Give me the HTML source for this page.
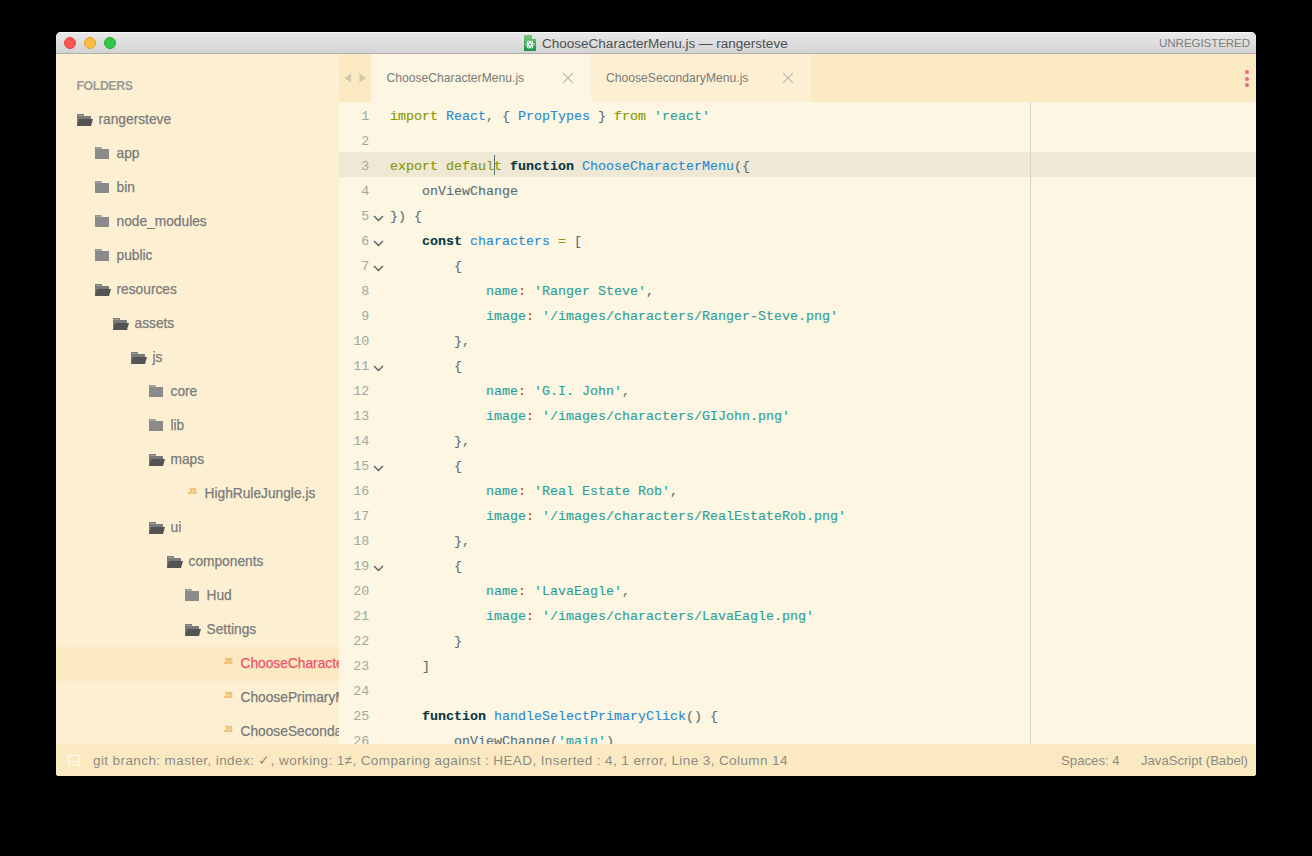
<!DOCTYPE html>
<html><head><meta charset="utf-8"><style>
html,body{margin:0;padding:0;background:#000;width:1312px;height:856px;overflow:hidden}
#win{position:absolute;left:56px;top:32px;width:1200px;height:744px;border-radius:5px 5px 3px 3px;overflow:hidden;background:#FDF6E3}
.abs{position:absolute}
#title{position:absolute;left:0;top:0;width:1200px;height:21px;background:linear-gradient(#fbfbfb 0,#f4f4f4 1px,#e8e8e8 1.5px,#d3d3d3 100%);border-bottom:1px solid #b0b0b2}
.tl{position:absolute;top:5px;width:12px;height:12px;border-radius:50%;box-sizing:border-box}
#ttl{position:absolute;left:486px;top:4px;font:13.52px "Liberation Sans",sans-serif;color:#505050;white-space:nowrap;line-height:16px}
#unreg{position:absolute;right:6px;top:3.6px;letter-spacing:-0.1px;font:11.6px "Liberation Sans",sans-serif;color:#7e7e7e;line-height:13px}
/* everything below is positioned in page coords */
#pg{position:absolute;left:-56px;top:-32px;width:1312px;height:856px}
#sidebar{position:absolute;left:56px;top:54px;width:283px;height:690px;background:#FDF0D2;overflow:hidden}
#sbin{position:absolute;left:-56px;top:-54px;width:1312px;height:856px}
.tn{position:absolute;-webkit-text-stroke:0.25px currentColor;font:13.75px "Liberation Sans",sans-serif;color:#787a7b;line-height:16px;white-space:nowrap}
.tn.sel{color:#F0506E}
.selrow{position:absolute;left:56px;width:283px;height:34px;background:#FBEAC1}
.fic{position:absolute;height:12px;line-height:0}
.jsic{position:absolute;font:bold 9px "Liberation Sans",sans-serif;color:#EDB665;line-height:9px;letter-spacing:-0.3px;transform:scaleX(0.82);transform-origin:0 0;-webkit-text-stroke:0.35px #EDB665}
#folders{position:absolute;left:76.5px;top:80px;letter-spacing:-0.4px;font:bold 12.3px "Liberation Sans",sans-serif;color:#9a9a98;line-height:13px}
#tabbar{position:absolute;left:339px;top:54px;width:917px;height:48px;background:#FBEAC1}
#tab1{position:absolute;left:371px;top:54px;width:220px;height:48px;background:#FDF6E3}
#tab2{position:absolute;left:591px;top:54px;width:220px;height:48px;background:#FDF0D2}
.tabt{position:absolute;top:71px;font:12.15px "Liberation Sans",sans-serif;color:#7a7a78;line-height:14px;white-space:nowrap}
#editor{position:absolute;left:339px;top:102px;width:917px;height:642px;background:#FDF6E3;overflow:hidden}
#edin{position:absolute;left:-339px;top:-102px;width:1312px;height:856px}
.ln{position:absolute;left:339px;width:30.2px;text-align:right;font:13.333px "Liberation Mono",monospace;color:#a0a8a5;line-height:25px;height:25px}
.cl{position:absolute;-webkit-text-stroke:0.12px currentColor;left:390px;font:13.333px "Liberation Mono",monospace;line-height:25px;height:25px;white-space:pre}
.fold{position:absolute;left:373px}
#curline{position:absolute;left:339px;top:152px;width:917px;height:25px;background:#EEE8D5}
#ruler{position:absolute;left:1030px;top:102px;width:1px;height:642px;background:#d5d4c9}
#caret{position:absolute;left:494px;top:155px;width:1px;height:20px;background:#586E75}
#status{position:absolute;left:56px;top:744px;width:1200px;height:32px;background:#FBEAC1}
.st{position:absolute;top:753px;font:13.5px "Liberation Sans",sans-serif;letter-spacing:0.4px;color:#8c8a85;line-height:16px;white-space:nowrap}
</style></head><body>
<div id="win">
 <div id="pg">
  <div id="sidebar"><div id="sbin">
   <div id="folders">FOLDERS</div>
   <div class="fic" style="left:77px;top:114px"><svg width="16" height="12" viewBox="0 0 16 12"><path d="M0 0.6 Q0 0 0.6 0 H6.4 Q7 0 7 0.6 V2 H13.4 Q14 2 14 2.6 V12 H0Z" fill="#7a7a7a"/><path d="M1 1 H6 V1.8 H1Z" fill="#a8a8a8"/><path d="M2 5 H16 L14 12 H0 Z" fill="#545454"/></svg></div><div class="tn" style="left:98.5px;top:112px">rangersteve</div><div class="fic" style="left:95px;top:147px"><svg width="14" height="12" viewBox="0 0 14 12"><path d="M0 0.6 Q0 0 0.6 0 H6 Q6.6 0 6.6 0.6 V2 H13.4 Q14 2 14 2.6 V11.4 Q14 12 13.4 12 H0.6 Q0 12 0 11.4 Z" fill="#8a8a8a"/><path d="M1 0.8 H5.8 V1.6 H1Z" fill="#c8c8c8"/></svg></div><div class="tn" style="left:116.5px;top:146px">app</div><div class="fic" style="left:95px;top:181px"><svg width="14" height="12" viewBox="0 0 14 12"><path d="M0 0.6 Q0 0 0.6 0 H6 Q6.6 0 6.6 0.6 V2 H13.4 Q14 2 14 2.6 V11.4 Q14 12 13.4 12 H0.6 Q0 12 0 11.4 Z" fill="#8a8a8a"/><path d="M1 0.8 H5.8 V1.6 H1Z" fill="#c8c8c8"/></svg></div><div class="tn" style="left:116.5px;top:180px">bin</div><div class="fic" style="left:95px;top:215px"><svg width="14" height="12" viewBox="0 0 14 12"><path d="M0 0.6 Q0 0 0.6 0 H6 Q6.6 0 6.6 0.6 V2 H13.4 Q14 2 14 2.6 V11.4 Q14 12 13.4 12 H0.6 Q0 12 0 11.4 Z" fill="#8a8a8a"/><path d="M1 0.8 H5.8 V1.6 H1Z" fill="#c8c8c8"/></svg></div><div class="tn" style="left:116.5px;top:214px">node_modules</div><div class="fic" style="left:95px;top:249px"><svg width="14" height="12" viewBox="0 0 14 12"><path d="M0 0.6 Q0 0 0.6 0 H6 Q6.6 0 6.6 0.6 V2 H13.4 Q14 2 14 2.6 V11.4 Q14 12 13.4 12 H0.6 Q0 12 0 11.4 Z" fill="#8a8a8a"/><path d="M1 0.8 H5.8 V1.6 H1Z" fill="#c8c8c8"/></svg></div><div class="tn" style="left:116.5px;top:248px">public</div><div class="fic" style="left:95px;top:284px"><svg width="16" height="12" viewBox="0 0 16 12"><path d="M0 0.6 Q0 0 0.6 0 H6.4 Q7 0 7 0.6 V2 H13.4 Q14 2 14 2.6 V12 H0Z" fill="#7a7a7a"/><path d="M1 1 H6 V1.8 H1Z" fill="#a8a8a8"/><path d="M2 5 H16 L14 12 H0 Z" fill="#545454"/></svg></div><div class="tn" style="left:116.5px;top:282px">resources</div><div class="fic" style="left:113px;top:318px"><svg width="16" height="12" viewBox="0 0 16 12"><path d="M0 0.6 Q0 0 0.6 0 H6.4 Q7 0 7 0.6 V2 H13.4 Q14 2 14 2.6 V12 H0Z" fill="#7a7a7a"/><path d="M1 1 H6 V1.8 H1Z" fill="#a8a8a8"/><path d="M2 5 H16 L14 12 H0 Z" fill="#545454"/></svg></div><div class="tn" style="left:134.5px;top:316px">assets</div><div class="fic" style="left:131px;top:352px"><svg width="16" height="12" viewBox="0 0 16 12"><path d="M0 0.6 Q0 0 0.6 0 H6.4 Q7 0 7 0.6 V2 H13.4 Q14 2 14 2.6 V12 H0Z" fill="#7a7a7a"/><path d="M1 1 H6 V1.8 H1Z" fill="#a8a8a8"/><path d="M2 5 H16 L14 12 H0 Z" fill="#545454"/></svg></div><div class="tn" style="left:152.5px;top:350px">js</div><div class="fic" style="left:149px;top:385px"><svg width="14" height="12" viewBox="0 0 14 12"><path d="M0 0.6 Q0 0 0.6 0 H6 Q6.6 0 6.6 0.6 V2 H13.4 Q14 2 14 2.6 V11.4 Q14 12 13.4 12 H0.6 Q0 12 0 11.4 Z" fill="#8a8a8a"/><path d="M1 0.8 H5.8 V1.6 H1Z" fill="#c8c8c8"/></svg></div><div class="tn" style="left:170.5px;top:384px">core</div><div class="fic" style="left:149px;top:419px"><svg width="14" height="12" viewBox="0 0 14 12"><path d="M0 0.6 Q0 0 0.6 0 H6 Q6.6 0 6.6 0.6 V2 H13.4 Q14 2 14 2.6 V11.4 Q14 12 13.4 12 H0.6 Q0 12 0 11.4 Z" fill="#8a8a8a"/><path d="M1 0.8 H5.8 V1.6 H1Z" fill="#c8c8c8"/></svg></div><div class="tn" style="left:170.5px;top:418px">lib</div><div class="fic" style="left:149px;top:454px"><svg width="16" height="12" viewBox="0 0 16 12"><path d="M0 0.6 Q0 0 0.6 0 H6.4 Q7 0 7 0.6 V2 H13.4 Q14 2 14 2.6 V12 H0Z" fill="#7a7a7a"/><path d="M1 1 H6 V1.8 H1Z" fill="#a8a8a8"/><path d="M2 5 H16 L14 12 H0 Z" fill="#545454"/></svg></div><div class="tn" style="left:170.5px;top:452px">maps</div><div class="jsic" style="left:188px;top:487px">JS</div><div class="tn" style="left:204.5px;top:486px">HighRuleJungle.js</div><div class="fic" style="left:149px;top:522px"><svg width="16" height="12" viewBox="0 0 16 12"><path d="M0 0.6 Q0 0 0.6 0 H6.4 Q7 0 7 0.6 V2 H13.4 Q14 2 14 2.6 V12 H0Z" fill="#7a7a7a"/><path d="M1 1 H6 V1.8 H1Z" fill="#a8a8a8"/><path d="M2 5 H16 L14 12 H0 Z" fill="#545454"/></svg></div><div class="tn" style="left:170.5px;top:520px">ui</div><div class="fic" style="left:167px;top:556px"><svg width="16" height="12" viewBox="0 0 16 12"><path d="M0 0.6 Q0 0 0.6 0 H6.4 Q7 0 7 0.6 V2 H13.4 Q14 2 14 2.6 V12 H0Z" fill="#7a7a7a"/><path d="M1 1 H6 V1.8 H1Z" fill="#a8a8a8"/><path d="M2 5 H16 L14 12 H0 Z" fill="#545454"/></svg></div><div class="tn" style="left:188.5px;top:554px">components</div><div class="fic" style="left:185px;top:589px"><svg width="14" height="12" viewBox="0 0 14 12"><path d="M0 0.6 Q0 0 0.6 0 H6 Q6.6 0 6.6 0.6 V2 H13.4 Q14 2 14 2.6 V11.4 Q14 12 13.4 12 H0.6 Q0 12 0 11.4 Z" fill="#8a8a8a"/><path d="M1 0.8 H5.8 V1.6 H1Z" fill="#c8c8c8"/></svg></div><div class="tn" style="left:206.5px;top:588px">Hud</div><div class="fic" style="left:185px;top:624px"><svg width="16" height="12" viewBox="0 0 16 12"><path d="M0 0.6 Q0 0 0.6 0 H6.4 Q7 0 7 0.6 V2 H13.4 Q14 2 14 2.6 V12 H0Z" fill="#7a7a7a"/><path d="M1 1 H6 V1.8 H1Z" fill="#a8a8a8"/><path d="M2 5 H16 L14 12 H0 Z" fill="#545454"/></svg></div><div class="tn" style="left:206.5px;top:622px">Settings</div><div class="selrow" style="top:647px"></div><div class="jsic" style="left:224px;top:657px">JS</div><div class="tn sel" style="left:240.5px;top:656px">ChooseCharacterMenu.js</div><div class="jsic" style="left:224px;top:691px">JS</div><div class="tn" style="left:240.5px;top:690px">ChoosePrimaryMenu.js</div><div class="jsic" style="left:224px;top:725px">JS</div><div class="tn" style="left:240.5px;top:724px">ChooseSecondaryMenu.js</div>
  </div></div>
  <div id="tabbar"></div>
  <div id="tab1"></div>
  <div id="tab2"></div>
  <svg class="abs" style="left:344px;top:73px" width="8" height="10" viewBox="0 0 8 10"><path d="M7 0.5 V9.5 L0.5 5Z" fill="#cfc6ad"/></svg>
  <svg class="abs" style="left:359px;top:73px" width="8" height="10" viewBox="0 0 8 10"><path d="M0.5 0.5 V9.5 L7 5Z" fill="#cfc6ad"/></svg>
  <div class="tabt" style="left:386.5px">ChooseCharacterMenu.js</div>
  <div class="tabt" style="left:606px">ChooseSecondaryMenu.js</div>
  <svg class="abs" style="left:562px;top:72px" width="12" height="12" viewBox="0 0 12 12"><path d="M1 1L11 11M11 1L1 11" stroke="#c0bdb4" stroke-width="1.2"/></svg>
  <svg class="abs" style="left:782px;top:72px" width="12" height="12" viewBox="0 0 12 12"><path d="M1 1L11 11M11 1L1 11" stroke="#c0bdb4" stroke-width="1.2"/></svg>
  <div class="abs" style="left:1244.5px;top:70px;width:4px;height:4px;border-radius:50%;background:#F0648A"></div>
  <div class="abs" style="left:1244.5px;top:76.5px;width:4px;height:4px;border-radius:50%;background:#F0648A"></div>
  <div class="abs" style="left:1244.5px;top:83px;width:4px;height:4px;border-radius:50%;background:#F0648A"></div>
  <div id="editor"><div id="edin">
   <div id="curline"></div>
   <div id="ruler"></div>
   <div class="ln" style="top:104px">1</div><div class="cl" style="top:104px"><span style="color:#859900">import </span><span style="color:#268BD2">React</span><span style="color:#586E75">, { </span><span style="color:#268BD2">PropTypes</span><span style="color:#586E75"> } </span><span style="color:#859900">from</span><span style="color:#586E75"> </span><span style="color:#2AA198">&#x27;react&#x27;</span></div><div class="ln" style="top:129px">2</div><div class="cl" style="top:129px"></div><div class="ln" style="top:154px">3</div><div class="cl" style="top:154px"><span style="color:#859900">export default </span><span style="color:#073642;font-weight:bold">function</span><span style="color:#586E75"> </span><span style="color:#268BD2">ChooseCharacterMenu</span><span style="color:#586E75">({</span></div><div class="ln" style="top:179px">4</div><div class="cl" style="top:179px"><span style="color:#586E75">    onViewChange</span></div><div class="ln" style="top:204px">5</div><svg class="fold" style="top:215px" width="11" height="7" viewBox="0 0 11 7"><path d="M1 1 L5.5 5.5 L10 1" fill="none" stroke="#5c5c5c" stroke-width="1.35"/></svg><div class="cl" style="top:204px"><span style="color:#586E75">}) {</span></div><div class="ln" style="top:229px">6</div><svg class="fold" style="top:240px" width="11" height="7" viewBox="0 0 11 7"><path d="M1 1 L5.5 5.5 L10 1" fill="none" stroke="#5c5c5c" stroke-width="1.35"/></svg><div class="cl" style="top:229px"><span style="color:#586E75">    </span><span style="color:#073642;font-weight:bold">const</span><span style="color:#586E75"> </span><span style="color:#268BD2">characters</span><span style="color:#859900"> = </span><span style="color:#586E75">[</span></div><div class="ln" style="top:254px">7</div><svg class="fold" style="top:265px" width="11" height="7" viewBox="0 0 11 7"><path d="M1 1 L5.5 5.5 L10 1" fill="none" stroke="#5c5c5c" stroke-width="1.35"/></svg><div class="cl" style="top:254px"><span style="color:#586E75">        {</span></div><div class="ln" style="top:279px">8</div><div class="cl" style="top:279px"><span style="color:#2AA198">            name</span><span style="color:#CB4B16">:</span><span style="color:#586E75"> </span><span style="color:#2AA198">&#x27;Ranger Steve&#x27;</span><span style="color:#586E75">,</span></div><div class="ln" style="top:304px">9</div><div class="cl" style="top:304px"><span style="color:#2AA198">            image</span><span style="color:#CB4B16">:</span><span style="color:#586E75"> </span><span style="color:#2AA198">&#x27;/images/characters/Ranger-Steve.png&#x27;</span></div><div class="ln" style="top:329px">10</div><div class="cl" style="top:329px"><span style="color:#586E75">        },</span></div><div class="ln" style="top:354px">11</div><svg class="fold" style="top:365px" width="11" height="7" viewBox="0 0 11 7"><path d="M1 1 L5.5 5.5 L10 1" fill="none" stroke="#5c5c5c" stroke-width="1.35"/></svg><div class="cl" style="top:354px"><span style="color:#586E75">        {</span></div><div class="ln" style="top:379px">12</div><div class="cl" style="top:379px"><span style="color:#2AA198">            name</span><span style="color:#CB4B16">:</span><span style="color:#586E75"> </span><span style="color:#2AA198">&#x27;G.I. John&#x27;</span><span style="color:#586E75">,</span></div><div class="ln" style="top:404px">13</div><div class="cl" style="top:404px"><span style="color:#2AA198">            image</span><span style="color:#CB4B16">:</span><span style="color:#586E75"> </span><span style="color:#2AA198">&#x27;/images/characters/GIJohn.png&#x27;</span></div><div class="ln" style="top:429px">14</div><div class="cl" style="top:429px"><span style="color:#586E75">        },</span></div><div class="ln" style="top:454px">15</div><svg class="fold" style="top:465px" width="11" height="7" viewBox="0 0 11 7"><path d="M1 1 L5.5 5.5 L10 1" fill="none" stroke="#5c5c5c" stroke-width="1.35"/></svg><div class="cl" style="top:454px"><span style="color:#586E75">        {</span></div><div class="ln" style="top:479px">16</div><div class="cl" style="top:479px"><span style="color:#2AA198">            name</span><span style="color:#CB4B16">:</span><span style="color:#586E75"> </span><span style="color:#2AA198">&#x27;Real Estate Rob&#x27;</span><span style="color:#586E75">,</span></div><div class="ln" style="top:504px">17</div><div class="cl" style="top:504px"><span style="color:#2AA198">            image</span><span style="color:#CB4B16">:</span><span style="color:#586E75"> </span><span style="color:#2AA198">&#x27;/images/characters/RealEstateRob.png&#x27;</span></div><div class="ln" style="top:529px">18</div><div class="cl" style="top:529px"><span style="color:#586E75">        },</span></div><div class="ln" style="top:554px">19</div><svg class="fold" style="top:565px" width="11" height="7" viewBox="0 0 11 7"><path d="M1 1 L5.5 5.5 L10 1" fill="none" stroke="#5c5c5c" stroke-width="1.35"/></svg><div class="cl" style="top:554px"><span style="color:#586E75">        {</span></div><div class="ln" style="top:579px">20</div><div class="cl" style="top:579px"><span style="color:#2AA198">            name</span><span style="color:#CB4B16">:</span><span style="color:#586E75"> </span><span style="color:#2AA198">&#x27;LavaEagle&#x27;</span><span style="color:#586E75">,</span></div><div class="ln" style="top:604px">21</div><div class="cl" style="top:604px"><span style="color:#2AA198">            image</span><span style="color:#CB4B16">:</span><span style="color:#586E75"> </span><span style="color:#2AA198">&#x27;/images/characters/LavaEagle.png&#x27;</span></div><div class="ln" style="top:629px">22</div><div class="cl" style="top:629px"><span style="color:#586E75">        }</span></div><div class="ln" style="top:654px">23</div><div class="cl" style="top:654px"><span style="color:#586E75">    ]</span></div><div class="ln" style="top:679px">24</div><div class="cl" style="top:679px"></div><div class="ln" style="top:704px">25</div><div class="cl" style="top:704px"><span style="color:#586E75">    </span><span style="color:#073642;font-weight:bold">function</span><span style="color:#586E75"> </span><span style="color:#268BD2">handleSelectPrimaryClick</span><span style="color:#586E75">()</span><span style="color:#586E75"> {</span></div><div class="ln" style="top:729px">26</div><div class="cl" style="top:729px"><span style="color:#586E75">        onViewChange(</span><span style="color:#2AA198">&#x27;main&#x27;</span><span style="color:#586E75">)</span></div>
   <div id="caret"></div>
  </div></div>
  <div id="status">
  </div>
  <svg class="abs" style="left:67px;top:754px" width="14" height="12" viewBox="0 0 14 12"><rect x="1.5" y="1.5" width="11" height="9.5" fill="none" stroke="#fffaf0" stroke-width="1"/><path d="M1.5 7.5H12.5" stroke="#fffaf0" stroke-width="1"/></svg>
  <div class="st" style="left:93px">git branch: master, index: ✓, working: 1≠, Comparing against : HEAD, Inserted : 4, 1 error, Line 3, Column 14</div>
  <div class="st" style="left:1061px;font-size:13.2px;letter-spacing:0">Spaces: 4</div>
  <div class="st" style="left:1141px;font-size:13.1px;letter-spacing:0">JavaScript (Babel)</div>
 </div>
 <div id="title">
  <div class="tl" style="left:8px;background:#fc5753;border:1px solid #df4744"></div>
  <div class="tl" style="left:28px;background:#fdbc40;border:1px solid #de9f34"></div>
  <div class="tl" style="left:48px;background:#33c748;border:1px solid #27aa35"></div>
  <svg class="abs" style="left:468px;top:3px" width="12" height="16" viewBox="0 0 12 16"><defs><linearGradient id="gg" x1="0" y1="0" x2="0" y2="1"><stop offset="0" stop-color="#80c884"/><stop offset="1" stop-color="#17944c"/></linearGradient></defs><path d="M0 0H8L12 4V16H0Z" fill="url(#gg)"/><path d="M8 0V4H12Z" fill="#d8f0dc"/><g fill="none" stroke="#fff" stroke-width="0.9"><ellipse cx="6" cy="9.5" rx="4" ry="1.6"/><ellipse cx="6" cy="9.5" rx="4" ry="1.6" transform="rotate(60 6 9.5)"/><ellipse cx="6" cy="9.5" rx="4" ry="1.6" transform="rotate(-60 6 9.5)"/></g></svg>
  <div id="ttl">ChooseCharacterMenu.js — rangersteve</div>
  <div id="unreg">UNREGISTERED</div>
 </div>
</div>
</body></html>
